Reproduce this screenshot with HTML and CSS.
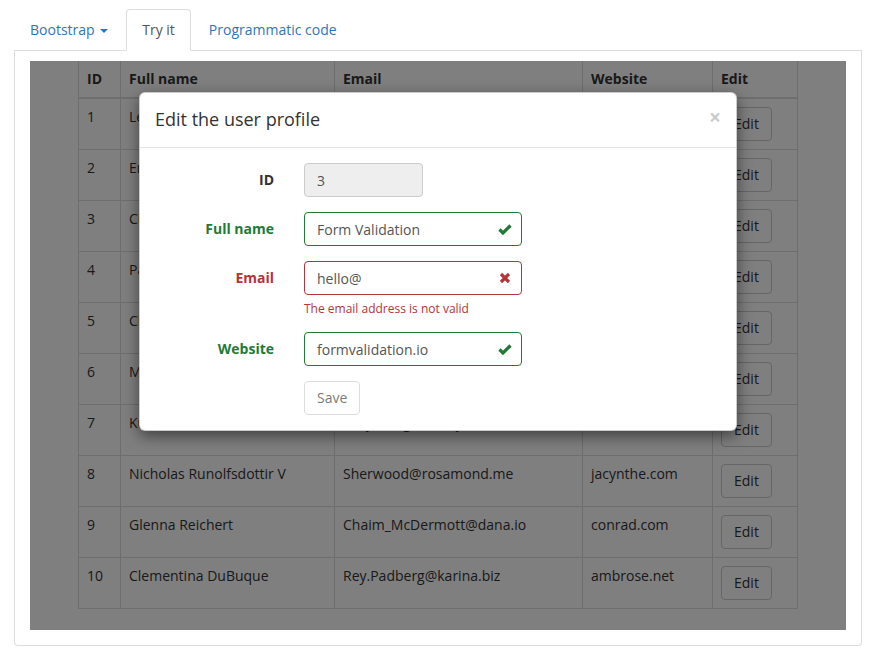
FILE: index.html
```html
<!DOCTYPE html>
<html lang="en">
<head>
<meta charset="utf-8">
<title>Edit the user profile</title>
<link rel="stylesheet" href="styles.css">
</head>
<body>
<div class="page">
  <ul class="nav-tabs">
    <li><a class="tab">Bootstrap <span class="caret"></span></a></li>
    <li class="active"><a class="tab">Try it</a></li>
    <li><a class="tab">Programmatic code</a></li>
  </ul>
  <div class="tab-panel">
    <div class="demo">
      <table class="users">
        <colgroup>
          <col class="c-id"><col class="c-name"><col class="c-email"><col class="c-web"><col class="c-edit">
        </colgroup>
        <thead>
          <tr><th>ID</th><th>Full name</th><th>Email</th><th>Website</th><th>Edit</th></tr>
        </thead>
        <tbody>
          <tr><td>1</td><td>Leanne Graham</td><td>Sincere@april.biz</td><td>hildegard.org</td><td><button class="btn">Edit</button></td></tr>
          <tr><td>2</td><td>Ervin Howell</td><td>Shanna@melissa.tv</td><td>anastasia.net</td><td><button class="btn">Edit</button></td></tr>
          <tr><td>3</td><td>Clementine Bauch</td><td>Nathan@yesenia.net</td><td>ramiro.info</td><td><button class="btn">Edit</button></td></tr>
          <tr><td>4</td><td>Patricia Lebsack</td><td>Julianne.OConner@kory.org</td><td>kale.biz</td><td><button class="btn">Edit</button></td></tr>
          <tr><td>5</td><td>Chelsey Dietrich</td><td>Lucio_Hettinger@annie.ca</td><td>demarco.info</td><td><button class="btn">Edit</button></td></tr>
          <tr><td>6</td><td>Mrs. Dennis Schulist</td><td>Karley_Dach@jasper.info</td><td>ola.org</td><td><button class="btn">Edit</button></td></tr>
          <tr><td>7</td><td>Kurtis Weissnat</td><td>Telly.Hoeger@billy.biz</td><td>elvis.io</td><td><button class="btn">Edit</button></td></tr>
          <tr><td>8</td><td>Nicholas Runolfsdottir V</td><td>Sherwood@rosamond.me</td><td>jacynthe.com</td><td><button class="btn">Edit</button></td></tr>
          <tr><td>9</td><td>Glenna Reichert</td><td>Chaim_McDermott@dana.io</td><td>conrad.com</td><td><button class="btn">Edit</button></td></tr>
          <tr><td>10</td><td>Clementina DuBuque</td><td>Rey.Padberg@karina.biz</td><td>ambrose.net</td><td><button class="btn">Edit</button></td></tr>
        </tbody>
      </table>
      <div class="backdrop"></div>
      <div class="modal">
        <div class="modal-header">
          <span class="close">&times;</span>
          <h4 class="modal-title">Edit the user profile</h4>
        </div>
        <div class="modal-body">
          <div class="form-row">
            <label class="lbl">ID</label>
            <div class="field field-sm"><input class="input input-readonly" value="3" readonly></div>
          </div>
          <div class="form-row success">
            <label class="lbl">Full name</label>
            <div class="field">
              <input class="input" value="Form Validation">
              <span class="feedback"><svg width="14" height="12" viewBox="0 0 14 12"><path d="M1.5 6.5 L5 10 L12.5 2.5" fill="none" stroke="currentColor" stroke-width="3.2"/></svg></span>
            </div>
          </div>
          <div class="form-row error">
            <label class="lbl">Email</label>
            <div class="field">
              <input class="input" value="hello@">
              <span class="feedback"><svg width="12" height="12" viewBox="0 0 12 12"><path d="M2 2 L10 10 M10 2 L2 10" fill="none" stroke="currentColor" stroke-width="3.2"/></svg></span>
              <small class="help">The email address is not valid</small>
            </div>
          </div>
          <div class="form-row success">
            <label class="lbl">Website</label>
            <div class="field">
              <input class="input" value="formvalidation.io">
              <span class="feedback"><svg width="14" height="12" viewBox="0 0 14 12"><path d="M1.5 6.5 L5 10 L12.5 2.5" fill="none" stroke="currentColor" stroke-width="3.2"/></svg></span>
            </div>
          </div>
          <div class="form-row last">
            <span class="lbl"></span>
            <div class="field"><button class="btn btn-disabled" disabled>Save</button></div>
          </div>
        </div>
      </div>
    </div>
  </div>
</div>
</body>
</html>
```

FILE: styles.css
```css
* { box-sizing: border-box; }

body {
  margin: 0;
  font-family: "Open Sans", "DejaVu Sans", sans-serif;
  font-size: 14px;
  line-height: 20px;
  color: #333;
  background: #fff;
}

.page {
  padding: 9px 14px 0 14px;
}

.nav-tabs {
  list-style: none;
  margin: 0;
  padding: 0;
  display: flex;
  border-bottom: 1px solid #ddd;
}

.nav-tabs li {
  margin-bottom: -1px;
}

.tab {
  display: block;
  padding: 10px 15px;
  margin-right: 2px;
  border: 1px solid transparent;
  border-radius: 4px 4px 0 0;
  color: #2f75bb;
  text-decoration: none;
}

.active .tab {
  color: #555;
  background: #fff;
  border-color: #ddd;
  border-bottom-color: transparent;
}

.caret {
  display: inline-block;
  width: 0;
  height: 0;
  margin-left: 2px;
  vertical-align: middle;
  border-top: 4px solid;
  border-left: 4px solid transparent;
  border-right: 4px solid transparent;
}

.tab-panel {
  border: 1px solid #ddd;
  border-top: 0;
  border-radius: 0 0 4px 4px;
  padding: 10px 15px 15px 15px;
}

.demo {
  position: relative;
  height: 569px;
  overflow: hidden;
  background: #fff;
}

.users {
  margin-left: 48px;
  width: 719px;
  border-collapse: collapse;
  table-layout: fixed;
}

.c-id { width: 42px; }
.c-name { width: 214px; }
.c-email { width: 248px; }
.c-web { width: 130px; }
.c-edit { width: 85px; }

.users th,
.users td {
  padding: 8px;
  text-align: left;
  vertical-align: top;
  border: 1px solid #ddd;
  white-space: nowrap;
  overflow: hidden;
}

.users th {
  font-weight: bold;
  border-top: 0;
  border-bottom: 2px solid #ddd;
}

.btn {
  display: inline-block;
  font-family: inherit;
  font-size: 14px;
  line-height: 20px;
  padding: 6px 12px;
  color: #333;
  background: #fff;
  border: 1px solid #ccc;
  border-radius: 4px;
}

.btn-disabled {
  opacity: 0.65;
}

.backdrop {
  position: absolute;
  inset: 0;
  background: rgba(0, 0, 0, 0.5);
}

.modal {
  position: absolute;
  top: 31px;
  left: 109px;
  width: 598px;
  background: #fff;
  border: 1px solid rgba(0, 0, 0, 0.2);
  border-radius: 6px;
  box-shadow: 0 5px 15px rgba(0, 0, 0, 0.5);
}

.modal-header {
  padding: 14px 15px 16px 15px;
  border-bottom: 1px solid #e5e5e5;
}

.modal-title {
  margin: 0;
  font-size: 18px;
  font-weight: normal;
  line-height: 24px;
  color: #333;
}

.close {
  float: right;
  margin-top: 0;
  font-size: 21px;
  font-weight: bold;
  line-height: 1;
  color: #000;
  opacity: 0.2;
}

.modal-body {
  padding: 15px;
}

.form-row {
  display: flex;
  margin-bottom: 15px;
}

.form-row.last {
  margin-bottom: 0;
}

.lbl {
  width: 119px;
  margin-right: 30px;
  padding-top: 7px;
  text-align: right;
  font-weight: bold;
  color: #333;
}

.field {
  position: relative;
  width: 218px;
}

.field-sm {
  width: 119px;
}

.input {
  display: block;
  width: 100%;
  height: 34px;
  padding: 6px 12px;
  font-family: inherit;
  font-size: 14px;
  line-height: 20px;
  color: #555;
  background: #fff;
  border: 1px solid #ccc;
  border-radius: 4px;
  outline: none;
}

.input-readonly {
  background: #eee;
}

.feedback {
  position: absolute;
  top: 0;
  right: 0;
  width: 34px;
  height: 34px;
  display: flex;
  align-items: center;
  justify-content: center;
}

.success .lbl,
.success .feedback { color: #1f7a36; }
.success .input { border-color: #1f7a36; padding-right: 42px; }

.error .lbl,
.error .feedback,
.error .help { color: #b3343a; }
.error .input { border-color: #b3343a; padding-right: 42px; }

.help {
  display: block;
  margin-top: 5px;
  font-size: 12px;
  line-height: 17px;
}
```
